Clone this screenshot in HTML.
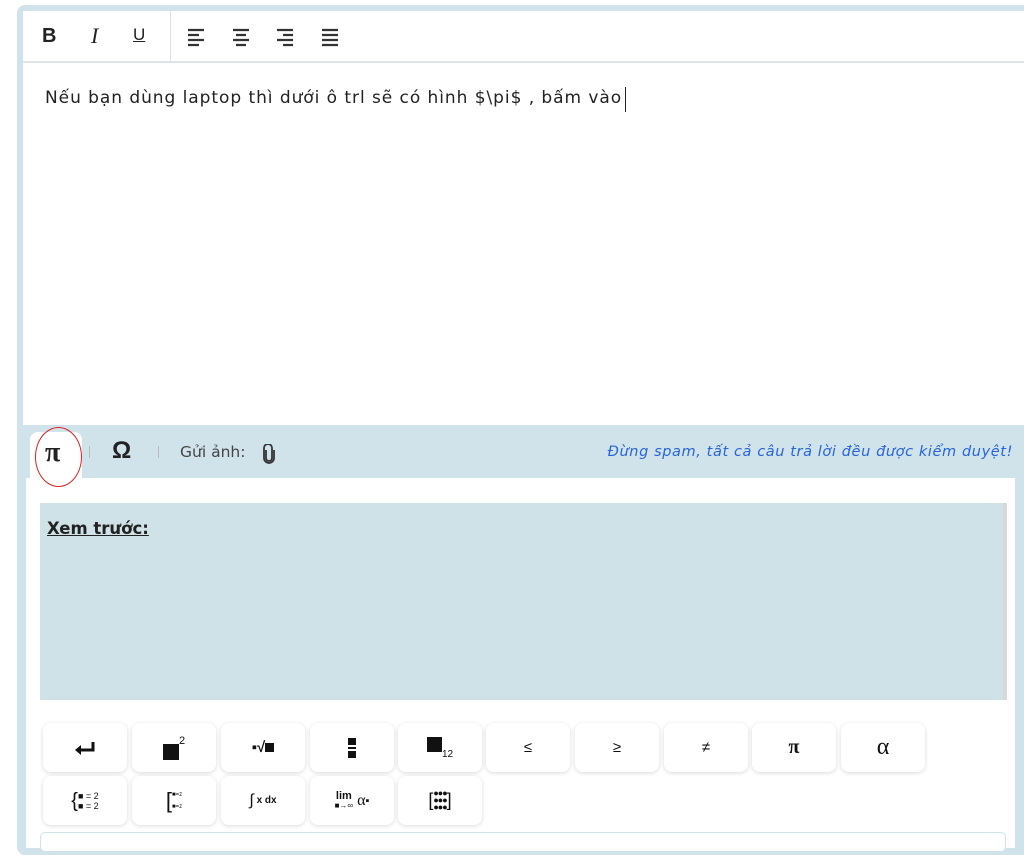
<!DOCTYPE html>
<html><head><meta charset="utf-8"><style>
*{box-sizing:border-box;margin:0;padding:0}
body{width:1024px;height:843px;background:#fff;position:relative;overflow:hidden;font-family:"Liberation Sans","DejaVu Sans",sans-serif;color:#222}
.a{position:absolute}
.btn{position:absolute;width:84px;height:49px;background:#fff;border-radius:8px;box-shadow:0 1px 4px rgba(0,0,0,.15);display:flex;align-items:center;justify-content:center;font-size:15px;color:#111}
.sq{display:inline-block;background:#111}
.tb{position:absolute;top:24px;font-size:20px;color:#222}
</style></head><body>
<div class="a" style="left:17px;top:5px;width:1020px;height:850px;background:#d0e3ea;border-radius:8px"></div>
<div class="a" style="left:23px;top:11px;width:1010px;height:414px;background:#fff"></div>
<div class="a" style="left:23px;top:61px;width:1010px;height:2px;background:#dde3e6"></div>
<div class="a" style="left:170px;top:11px;width:1px;height:51px;background:#dde3e6"></div>
<div class="tb" style="left:42px;font-weight:bold;font-size:20px;top:25px">B</div>
<div class="tb" style="left:91px;font-family:'Liberation Serif',serif;font-style:italic;font-size:22px;top:23px">I</div>
<div class="tb" style="left:133px;font-size:17px;top:25px;text-decoration:underline">U</div>
<svg class="a" style="left:188px;top:28px" width="160" height="20" viewBox="0 0 160 20" stroke="#333" stroke-width="2.2">
<path d="M0 2h16M0 7h11M0 12h16M0 17h11"/>
<path d="M45 2h16M48 7h10M45 12h16M48 17h10"/>
<path d="M89 2h16M95 7h10M89 12h16M95 17h10"/>
<path d="M134 2h16M134 7h16M134 12h16M134 17h16"/>
</svg>
<div class="a" style="left:45px;top:88px;font-family:'DejaVu Sans',sans-serif;font-size:17px;letter-spacing:0.95px;color:#222;white-space:nowrap">Nếu bạn dùng laptop thì dưới ô trl sẽ có hình $\pi$ , bấm vào</div>
<div class="a" style="left:625px;top:87px;width:1px;height:25px;background:#222"></div>
<div class="a" style="left:26px;top:478px;width:989px;height:370px;background:#fff"></div>
<div class="a" style="left:30px;top:432px;width:52px;height:50px;background:#fff;border-radius:8px 8px 0 0"></div>
<div class="a" style="left:35px;top:427px;width:47px;height:60px;border:1.5px solid #d22;border-radius:50%"></div>
<div class="a" style="left:45px;top:437px;font-family:'Liberation Serif',serif;font-size:28px;font-weight:bold">π</div>
<div class="a" style="left:89px;top:446px;width:1px;height:12px;background:#bbb"></div>
<div class="a" style="left:112px;top:437px;font-size:24px;font-weight:bold">Ω</div>
<div class="a" style="left:158px;top:446px;width:1px;height:12px;background:#bbb"></div>
<div class="a" style="left:180px;top:443px;font-family:'DejaVu Sans',sans-serif;font-size:15.5px;color:#444">Gửi ảnh:</div>
<svg class="a" style="left:262px;top:444px" width="14" height="20" viewBox="0 0 14 20" fill="none" stroke="#333" stroke-width="1.8"><path d="M4 6v8a3 3 0 0 0 6 0V4a4 4 0 0 0-8 0v10a5 5 0 0 0 10 0V6"/></svg>
<div class="a" style="right:11px;top:444px;font-family:'DejaVu Sans',sans-serif;font-size:14.5px;letter-spacing:0.6px;font-style:italic;color:#2864d8;white-space:nowrap">Đừng spam, tất cả câu trả lời đều được kiểm duyệt!</div>
<div class="a" style="left:40px;top:503px;width:967px;height:197px;background:#cfe2e8;border-right:4px solid #d8d8d8"></div>
<div class="a" style="left:47px;top:519px;font-family:'DejaVu Sans',sans-serif;font-size:16.5px;font-weight:bold;text-decoration:underline;color:#222">Xem trước:</div>
<div class="btn" style="left:43px;top:723px"><svg width="22" height="14" viewBox="0 0 22 14"><path d="M19 1v8H5" stroke="#111" stroke-width="3" fill="none"/><path d="M1 9l6-5v10z" fill="#111"/></svg></div>
<div class="btn" style="left:132px;top:723px"><span class="sq" style="width:16px;height:16px;margin-top:8px"></span><sup style="font-size:11px;margin-top:-14px">2</sup></div>
<div class="btn" style="left:221px;top:723px;font-weight:bold">▪√<span class="sq" style="width:9px;height:9px"></span></div>
<div class="btn" style="left:310px;top:723px;flex-direction:column"><span class="sq" style="width:8px;height:7px"></span><span style="width:8px;height:2px;background:#111;margin:2px 0"></span><span class="sq" style="width:8px;height:7px"></span></div>
<div class="btn" style="left:398px;top:723px"><span class="sq" style="width:15px;height:15px;margin-top:-6px"></span><span style="font-size:10px;margin-top:14px">12</span></div>
<div class="btn" style="left:486px;top:723px">≤</div>
<div class="btn" style="left:575px;top:723px">≥</div>
<div class="btn" style="left:664px;top:723px">≠</div>
<div class="btn" style="left:752px;top:723px;font-family:'Liberation Serif',serif;font-size:20px;font-weight:bold">π</div>
<div class="btn" style="left:841px;top:723px;font-family:'Liberation Serif',serif;font-size:24px">α</div>
<div class="btn" style="left:43px;top:776px;font-size:9px;line-height:10px"><span style="font-size:20px;font-weight:200">{</span><span>■ = 2<br>■ = 2</span></div>
<div class="btn" style="left:132px;top:776px;font-size:6px;line-height:12px"><span style="font-size:22px;font-weight:200">[</span><span>■=z<br>■=z</span></div>
<div class="btn" style="left:221px;top:776px;font-size:10px;font-weight:bold"><span style="font-size:16px;font-weight:normal">∫</span>&nbsp;x dx</div>
<div class="btn" style="left:310px;top:776px;font-size:11px"><span style="text-align:center;line-height:9px"><b>lim</b><br><span style="font-size:8px">■→∞</span></span><span style="font-family:'Liberation Serif',serif;font-size:16px">&nbsp;α</span>▪</div>
<div class="btn" style="left:398px;top:776px;font-size:18px">[<span style="font-size:9px;line-height:7px;letter-spacing:-1px">●●●<br>●●●<br>●●●</span>]</div>
<div class="a" style="left:40px;top:832px;width:966px;height:20px;border:1.5px solid #d0e3ea;border-radius:5px;background:#fff"></div>
</body></html>
